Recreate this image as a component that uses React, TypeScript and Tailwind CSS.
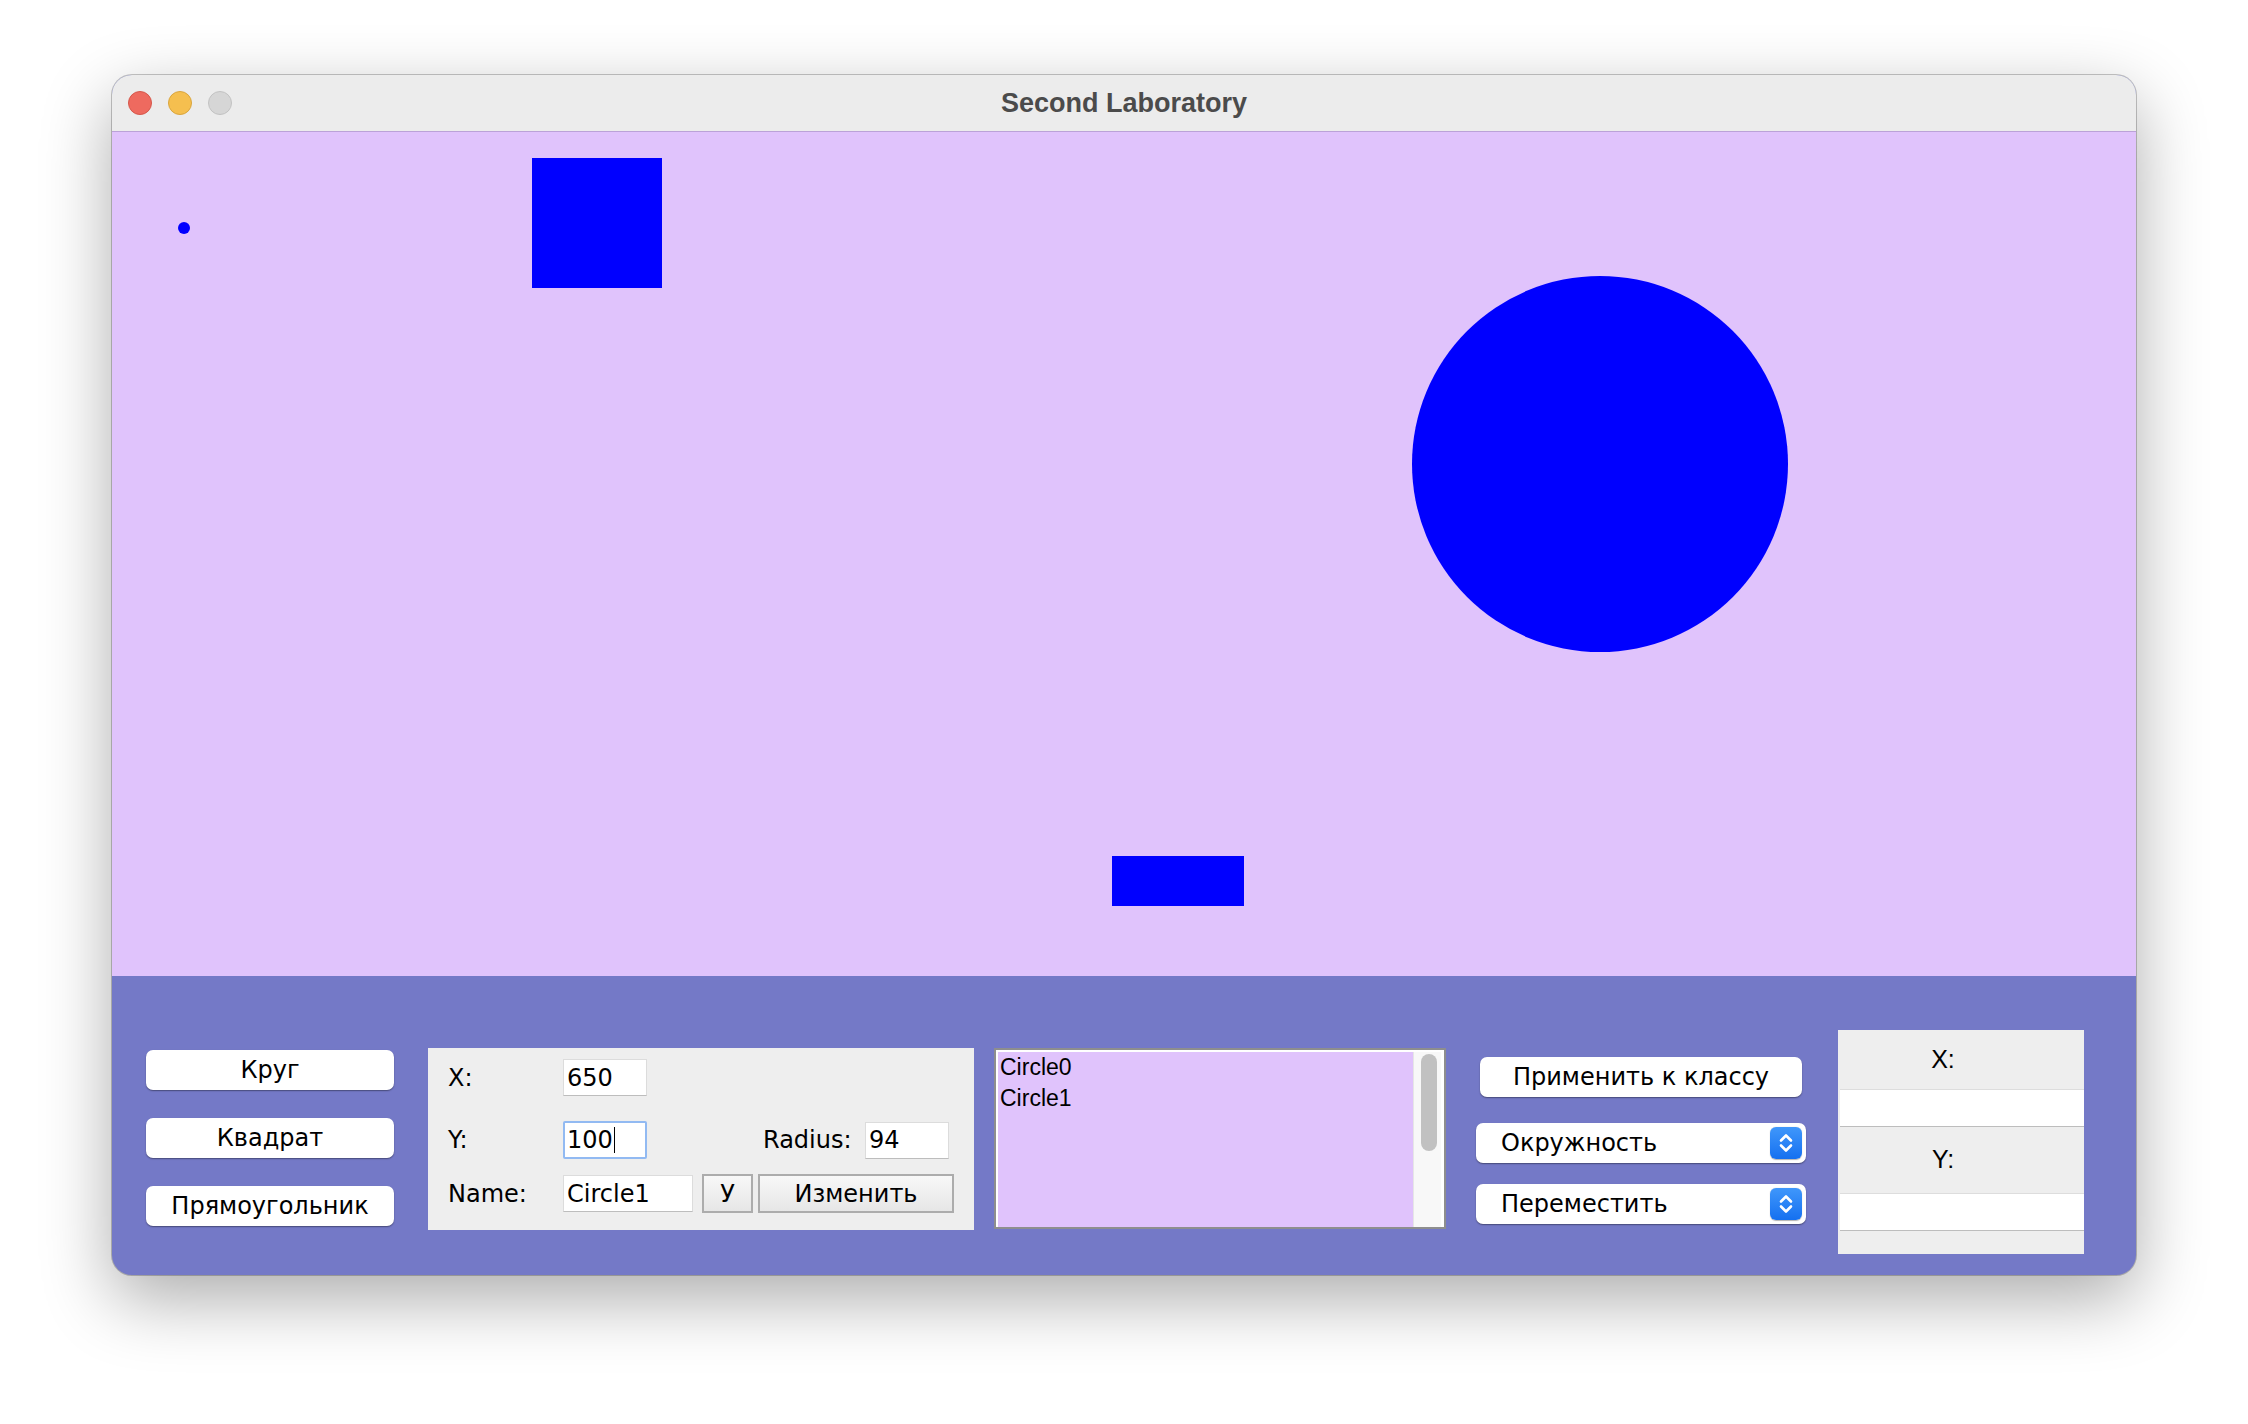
const ui = "font-['DejaVu_Sans',sans-serif]";

type Shape = { kind: "circle" | "rect"; x: number; y: number; w: number; h: number };

const shapes: Shape[] = [
  { kind: "circle", x: 66, y: 90, w: 12, h: 12 },
  { kind: "rect", x: 420, y: 26, w: 130, h: 130 },
  { kind: "circle", x: 1300, y: 144, w: 376, h: 376 },
  { kind: "rect", x: 1000, y: 724, w: 132, h: 50 },
];

function MacButton({ label }: { label: string }) {
  return (
    <button
      className={`h-10 w-full rounded-[7px] bg-white text-[24px] text-black shadow-[0_1px_1.5px_rgba(0,0,0,0.4)] ${ui}`}
    >
      {label}
    </button>
  );
}

function Field({ value, w }: { value: string; w: string }) {
  return (
    <div
      className={`flex h-[37px] items-center border border-[#dcdcdc] border-b-[#bdbdbd] bg-white pl-[3px] text-[24px] ${w}`}
    >
      {value}
    </div>
  );
}

function Chevrons() {
  return (
    <div className="flex h-8 w-8 items-center justify-center rounded-[6px] bg-gradient-to-b from-[#3f97fb] to-[#1470f0] shadow-[0_0.5px_1px_rgba(0,0,0,0.3)]">
      <svg width="32" height="32" viewBox="0 0 32 32" fill="none">
        <path d="M11 13.5 L16 8.5 L21 13.5" stroke="white" strokeWidth="2.6" strokeLinecap="round" strokeLinejoin="round" />
        <path d="M11 18.5 L16 23.5 L21 18.5" stroke="white" strokeWidth="2.6" strokeLinecap="round" strokeLinejoin="round" />
      </svg>
    </div>
  );
}

function Combo({ label, mt }: { label: string; mt: string }) {
  return (
    <div
      className={`flex h-10 w-full items-center justify-between rounded-[7px] bg-white pl-[25px] pr-[4px] text-[24px] text-black shadow-[0_1px_1.5px_rgba(0,0,0,0.4)] ${mt}`}
    >
      <span>{label}</span>
      <Chevrons />
    </div>
  );
}

function SwingButton({ label, w, ml }: { label: string; w: string; ml: string }) {
  return (
    <button
      className={`h-[39px] border-2 border-[#acacac] bg-gradient-to-b from-[#f8f8f8] to-[#e6e6e6] text-[24px] text-black ${w} ${ml}`}
    >
      {label}
    </button>
  );
}

export default function App() {
  return (
    <div className="min-h-screen w-full bg-white pt-[75px]">
      <div className="mx-auto flex h-[1200px] w-[2024px] flex-col overflow-hidden rounded-[20px] bg-[#7479c7] shadow-[0_24px_70px_rgba(0,0,0,0.33),0_0_0_1px_rgba(0,0,0,0.22)]">
        {/* title bar */}
        <div className="relative flex h-[57px] items-center justify-center border-b border-[#bba2d8] bg-[#ececec]">
          <div className="absolute left-[16px] top-[16px] flex gap-4">
            <span className="h-6 w-6 rounded-full border border-[#d5574b] bg-[#ee6a5f]" />
            <span className="h-6 w-6 rounded-full border border-[#d9a53e] bg-[#f5bf4f]" />
            <span className="h-6 w-6 rounded-full border border-[#c2c2c2] bg-[#d6d6d6]" />
          </div>
          <h1 className="font-['Liberation_Sans',sans-serif] text-[27px] font-bold text-[#4b4b4b]">
            Second Laboratory
          </h1>
        </div>

        {/* drawing canvas */}
        <div className="relative h-[844px] bg-[#e0c3fc]">
          {shapes.map((s, i) => (
            <div
              key={i}
              className={`absolute bg-[#0000ff] ${s.kind === "circle" ? "rounded-full" : ""}`}
              style={{ left: s.x, top: s.y, width: s.w, height: s.h }}
            />
          ))}
        </div>

        {/* control panel */}
        <div className={`flex flex-1 items-start pl-[34px] text-black ${ui}`}>
          <div className="mt-[74px] flex w-[248px] shrink-0 flex-col gap-[28px]">
            <MacButton label="Круг" />
            <MacButton label="Квадрат" />
            <MacButton label="Прямоугольник" />
          </div>

          <div className="ml-[34px] mt-[72px] h-[182px] w-[546px] shrink-0 bg-[#eeeeee] pl-[20px] pt-[11px] text-[24px]">
            <div className="flex h-[37px] items-center">
              <span className="w-[115px] shrink-0">X:</span>
              <Field value="650" w="w-[84px]" />
            </div>
            <div className="mt-[25px] flex h-[38px] items-center">
              <span className="w-[115px] shrink-0">Y:</span>
              <div className="flex h-[38px] w-[84px] items-center rounded-[2px] border-2 border-[#92baf2] bg-white pl-[2px]">
                100
                <span className="ml-[1px] h-[26px] w-px bg-black" />
              </div>
              <span className="ml-[116px] w-[102px] shrink-0">Radius:</span>
              <Field value="94" w="w-[84px]" />
            </div>
            <div className="mt-[15px] flex h-[39px] items-center">
              <span className="w-[115px] shrink-0">Name:</span>
              <Field value="Circle1" w="w-[130px]" />
              <SwingButton label="У" w="w-[51px]" ml="ml-[9px]" />
              <SwingButton label="Изменить" w="w-[196px]" ml="ml-[5px]" />
            </div>
          </div>

          <div className="ml-[20px] mt-[72px] flex h-[181px] w-[452px] shrink-0 border-2 border-[#8e8e8e] bg-white pl-[2px] pr-[3px] pt-[2px]">
            <div className="flex-1 bg-[#e0c3fc] pl-[2px] font-['Liberation_Sans',sans-serif] text-[23px] leading-[31px]">
              <div>Circle0</div>
              <div>Circle1</div>
            </div>
            <div className="w-[28px] border-l border-[#e6e6e6] bg-[#f8f8f8] pl-[7px] pt-[2px]">
              <div className="h-[97px] w-4 rounded-full bg-[#c1c1c1]" />
            </div>
          </div>

          <div className="ml-[30px] mt-[81px] flex w-[330px] shrink-0 flex-col">
            <div className="px-[4px]">
              <MacButton label="Применить к классу" />
            </div>
            <Combo label="Окружность" mt="mt-[26px]" />
            <Combo label="Переместить" mt="mt-[21px]" />
          </div>

          <div className="ml-[32px] mt-[54px] flex h-[224px] w-[246px] shrink-0 flex-col bg-[#eeeeee] font-['Liberation_Sans',sans-serif] text-[25px]">
            <div className="flex h-[59px] items-center justify-center pr-[36px]">X:</div>
            <div className="ml-[2px] h-[38px] border-y border-t-[#dddddd] border-b-[#bdbdbd] bg-white" />
            <div className="flex h-[66px] items-center justify-center pr-[36px]">Y:</div>
            <div className="ml-[2px] h-[38px] border-y border-t-[#dddddd] border-b-[#bdbdbd] bg-white" />
          </div>
        </div>
      </div>
    </div>
  );
}
